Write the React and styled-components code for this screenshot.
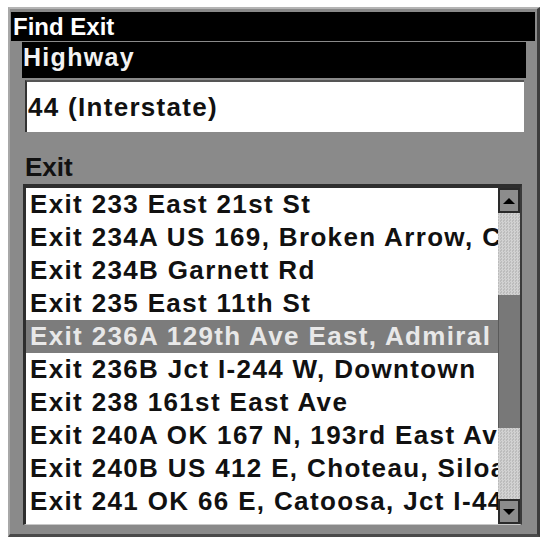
import React from "react";
import styled, {createGlobalStyle} from "styled-components";

const GlobalStyle = createGlobalStyle`
  html, body {
    margin: 0;
    padding: 0;
    background: #ffffff;
  }
  body {
    font-family: "Liberation Sans", Arial, sans-serif;
    font-weight: bold;
  }
`;

const Screen = styled.div`
  width: 545px;
  height: 542px;
  padding: 7px 5px 5px 8px;
  box-sizing: border-box;
`;

const Panel = styled.div`
  width: 532px;
  height: 530px;
  box-sizing: border-box;
  background: #8a8a8a;
  border-top: 2px solid #b4b4b4;
  border-left: 2px solid #a8a8a8;
  border-right: 3px solid #3c3c3c;
  border-bottom: 3px solid #4a4a4a;
  display: flex;
  flex-direction: column;
`;

const TitleBar = styled.div`
  margin: 3px 2px 0 1px;
  height: 29px;
  background: #000;
  color: #fff;
  font-size: 24px;
  line-height: 29px;
  padding-left: 2px;
`;

const SectionHeader = styled.div`
  margin: 1px 11px 0 12px;
  height: 36px;
  box-sizing: border-box;
  background: #000;
  color: #f2f2f2;
  font-size: 25px;
  line-height: 30px;
  letter-spacing: 1.3px;
  padding: 0 0 6px 1px;
`;

const InputBox = styled.div`
  margin: 2px 13px 0 15px;
  height: 52px;
  box-sizing: border-box;
  background: #fff;
  border-top: 2px solid #555;
  border-left: 2px solid #333;
  display: flex;
  align-items: center;
  padding-left: 1px;
  font-size: 26px;
  letter-spacing: 1.3px;
  color: #111;
`;

const Label = styled.div`
  margin: 20px 0 0 15px;
  height: 32px;
  font-size: 26px;
  line-height: 30px;
  color: #111;
`;

const ListBox = styled.div`
  margin: 0 15px 0 13px;
  height: 341px;
  box-sizing: border-box;
  background: #fff;
  border-top: 4px solid #2e2e2e;
  border-left: 3px solid #2e2e2e;
  border-right: 2px solid #3a3a3a;
  border-bottom: 1px solid #c8c8c8;
  display: flex;
`;

const Rows = styled.div`
  flex: 1;
  min-width: 0;
  overflow: hidden;
`;

const Row = styled.div`
  height: 33px;
  line-height: 33px;
  padding-left: 4px;
  font-size: 26px;
  letter-spacing: 1.35px;
  white-space: nowrap;
  overflow: hidden;
  background: ${p => (p.$selected ? "#7c7c7c" : "transparent")};
  color: ${p => (p.$selected ? "#e8e8e8" : "#111")};
`;

const Scrollbar = styled.div`
  width: 22px;
  display: flex;
  flex-direction: column;
`;

const ArrowButton = styled.div`
  height: 25px;
  box-sizing: border-box;
  background: #8c8c8c;
  border: 2px solid #2a2a2a;
  display: flex;
  align-items: center;
  justify-content: center;
`;

const Track = styled.div`
  flex: 1;
  background-color: #c8c8c8;
  background-image: repeating-conic-gradient(#d2d2d2 0% 25%, #bcbcbc 0% 50%);
  background-size: 3px 3px;
  padding-top: 82px;
  box-sizing: border-box;
`;

const Thumb = styled.div`
  height: 133px;
  background: #787878;
  border-left: 1px solid #5a5a5a;
`;

const exits = [
    "Exit 233 East 21st St",
    "Exit 234A US 169, Broken Arrow, Coweta",
    "Exit 234B Garnett Rd",
    "Exit 235 East 11th St",
    "Exit 236A 129th Ave East, Admiral Pl",
    "Exit 236B Jct I-244 W, Downtown",
    "Exit 238 161st East Ave",
    "Exit 240A OK 167 N, 193rd East Ave",
    "Exit 240B US 412 E, Choteau, Siloam Springs",
    "Exit 241 OK 66 E, Catoosa, Jct I-44",
];

function App() {
    return (
        <>
            <GlobalStyle/>
            <Screen>
                <Panel>
                    <TitleBar>Find Exit</TitleBar>
                    <SectionHeader>Highway</SectionHeader>
                    <InputBox>44 (Interstate)</InputBox>
                    <Label>Exit</Label>
                    <ListBox>
                        <Rows>
                            {exits.map((name, i) => (
                                <Row key={name} $selected={i === 4}>{name}</Row>
                            ))}
                        </Rows>
                        <Scrollbar>
                            <ArrowButton>
                                <svg width="12" height="6" viewBox="0 0 12 6">
                                    <polygon points="6,0 12,6 0,6" fill="#000"/>
                                </svg>
                            </ArrowButton>
                            <Track>
                                <Thumb/>
                            </Track>
                            <ArrowButton>
                                <svg width="12" height="6" viewBox="0 0 12 6">
                                    <polygon points="0,0 12,0 6,6" fill="#000"/>
                                </svg>
                            </ArrowButton>
                        </Scrollbar>
                    </ListBox>
                </Panel>
            </Screen>
        </>
    );
}

export default App;
